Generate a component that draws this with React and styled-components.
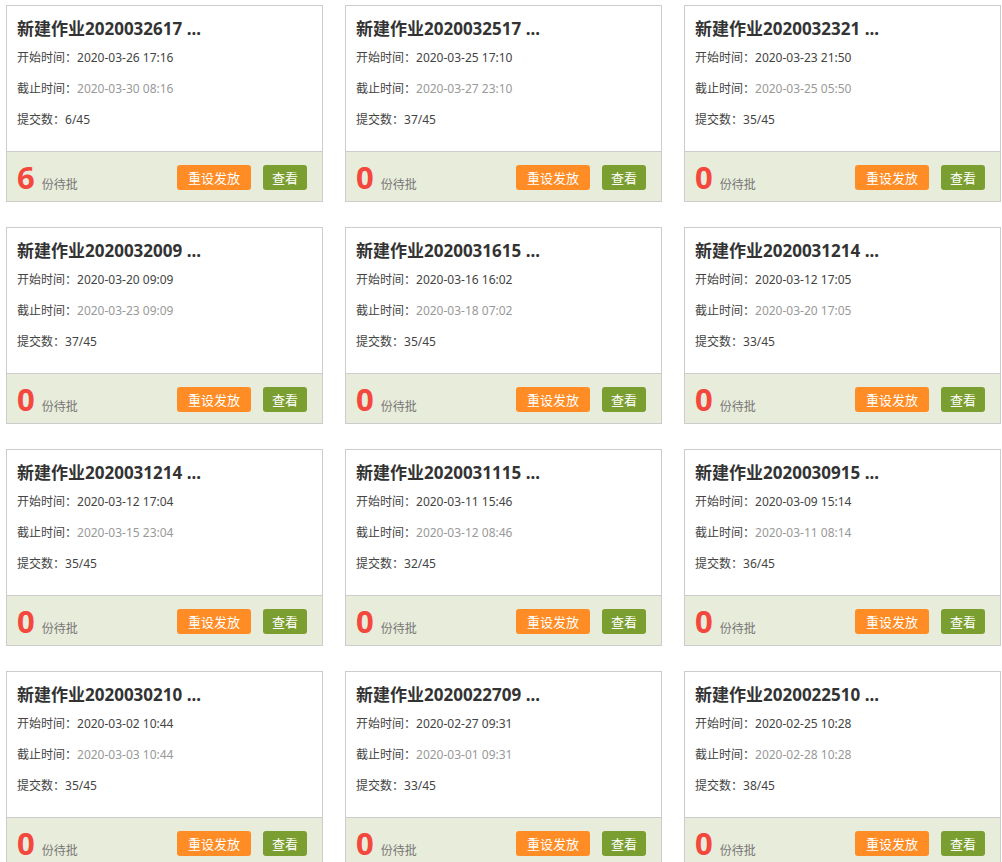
import React from 'react';
import styled, { createGlobalStyle } from 'styled-components';

const GlobalStyle = createGlobalStyle`
    html, body {
        margin: 0;
        padding: 0;
        background: #fff;
        font-family: "Noto Sans", "Noto Sans CJK SC", sans-serif;
    }
`
const Page = styled.div`
    display: grid;
    grid-template-columns: repeat(3, 317px);
    column-gap: 22px;
    row-gap: 25px;
    padding: 5px 1px 0 6px;
`
const Card = styled.div`
    display: flex;
    flex-flow: column nowrap;
    height: 197px;
    box-sizing: border-box;
    border: 1px solid #cccccc;
    background: #fff;
`
const Body = styled.div`
    height: 146px;
    box-sizing: border-box;
    padding: 10px 10px 0 10px;
    border-bottom: 1px solid #cccccc;
`
const Title = styled.div`
    height: 26px;
    line-height: 26px;
    font-size: 17px;
    font-weight: bold;
    color: #333;
    white-space: nowrap;
`
const Row = styled.div`
    line-height: 31px;
    font-size: 12px;
    color: #444;
    white-space: nowrap;
`
const Value = styled.span`
    color: ${props => props.light ? '#999' : '#444'};
`
const Footer = styled.div`
    flex: 1;
    display: flex;
    align-items: center;
    justify-content: space-between;
    padding: 2px 15px 0 10px;
    background: #e8ecda;
`
const Pending = styled.div`
    display: flex;
    align-items: baseline;
`
const Count = styled.span`
    font-size: 31px;
    font-weight: bold;
    color: #f4473d;
    line-height: 1;
`
const CountLabel = styled.span`
    margin-left: 7px;
    font-size: 12px;
    color: #777;
`
const Actions = styled.div`
    display: flex;
    gap: 12px;
`
const Button = styled.button`
    height: 25px;
    width: ${props => props.wide ? '74px' : '44px'};
    padding: 0;
    border: none;
    border-radius: 3px;
    background: ${props => props.green ? '#7b9e30' : '#ff8c25'};
    color: #fff;
    font-family: inherit;
    font-size: 13px;
    cursor: pointer;
`

const tasks = [
    ['2020032617', '2020-03-26 17:16', '2020-03-30 08:16', '6/45', 6],
    ['2020032517', '2020-03-25 17:10', '2020-03-27 23:10', '37/45', 0],
    ['2020032321', '2020-03-23 21:50', '2020-03-25 05:50', '35/45', 0],
    ['2020032009', '2020-03-20 09:09', '2020-03-23 09:09', '37/45', 0],
    ['2020031615', '2020-03-16 16:02', '2020-03-18 07:02', '35/45', 0],
    ['2020031214', '2020-03-12 17:05', '2020-03-20 17:05', '33/45', 0],
    ['2020031214', '2020-03-12 17:04', '2020-03-15 23:04', '35/45', 0],
    ['2020031115', '2020-03-11 15:46', '2020-03-12 08:46', '32/45', 0],
    ['2020030915', '2020-03-09 15:14', '2020-03-11 08:14', '36/45', 0],
    ['2020030210', '2020-03-02 10:44', '2020-03-03 10:44', '35/45', 0],
    ['2020022709', '2020-02-27 09:31', '2020-03-01 09:31', '33/45', 0],
    ['2020022510', '2020-02-25 10:28', '2020-02-28 10:28', '38/45', 0],
]

const App = () => (
    <>
        <GlobalStyle />
        <Page>
            {tasks.map(([name, start, end, done, pending], key) =>
                <Card key={key}>
                    <Body>
                        <Title>新建作业{name} ...</Title>
                        <Row>开始时间：<Value>{start}</Value></Row>
                        <Row>截止时间：<Value light>{end}</Value></Row>
                        <Row>提交数：<Value>{done}</Value></Row>
                    </Body>
                    <Footer>
                        <Pending>
                            <Count>{pending}</Count>
                            <CountLabel>份待批</CountLabel>
                        </Pending>
                        <Actions>
                            <Button wide>重设发放</Button>
                            <Button green>查看</Button>
                        </Actions>
                    </Footer>
                </Card>
            )}
        </Page>
    </>
)

export default App;
